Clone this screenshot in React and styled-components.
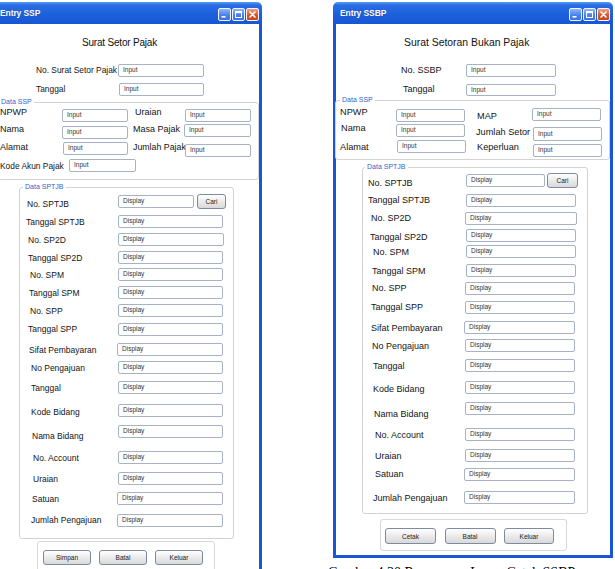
import React from 'react';
import styled, { createGlobalStyle } from 'styled-components';

const Global = createGlobalStyle`
  html, body { margin: 0; padding: 0; background: #fff; overflow: hidden; }
  body { font-family: "Liberation Sans", Arial, sans-serif; color: #151515; }
`;

const Page = styled.div`
  display: flex;
  align-items: flex-start;
  width: 615px;
  height: 569px;
  padding-top: 2px;
  box-sizing: border-box;
  overflow: hidden;
`;

const Column = styled.div`
  display: flex;
  flex-direction: column;
  align-items: flex-start;
  flex-shrink: 0;
  margin-left: ${p => p.$ml}px;
`;

const Window = styled.div`
  display: flex;
  flex-direction: column;
  flex-shrink: 0;
  width: ${p => p.$w}px;
  margin-left: ${p => p.$ml || 0}px;
`;

const TitleBar = styled.div`
  height: 22px;
  box-sizing: border-box;
  display: flex;
  align-items: center;
  padding: 0 3px 0 7px;
  border-radius: 5px 5px 0 0;
  background: linear-gradient(to bottom, #5a9cf6 0%, #2a6ee4 14%, #1c60dc 55%, #1856d2 100%);
`;

const TitleText = styled.span`
  flex: 1;
  color: #fff;
  font-weight: bold;
  font-size: 8.5px;
  letter-spacing: -0.1px;
  text-shadow: 0 0 1px rgba(0, 0, 0, 0.35);
`;

const Controls = styled.div`
  display: flex;
  gap: 1px;
  margin-top: 2px;
`;

const Ctrl = styled.span`
  width: 13px;
  height: 13px;
  box-sizing: border-box;
  border: 1px solid #f2f6ff;
  border-radius: 2px;
  display: flex;
  align-items: center;
  justify-content: center;
  background: ${p => (p.$close
    ? 'linear-gradient(to bottom, #f0a080, #d8532a 60%, #c8441c)'
    : 'linear-gradient(to bottom, #8fb6f8, #4b82ec 55%, #3b70e2)')};
`;

const WinBody = styled.div`
  display: flex;
  flex-direction: column;
  align-items: flex-start;
  background: #fff;
  border: 3px solid #1a55d6;
  border-top: 0;
  padding-bottom: ${p => p.$pb}px;
`;

const Heading = styled.div`
  margin: 13px 0 0 ${p => p.$indent}px;
  font-size: ${p => p.$size}px;
  letter-spacing: ${p => p.$ls || 0}px;
  line-height: 12px;
  white-space: nowrap;
  color: #111;
`;

const RowsWrap = styled.div`
  display: flex;
  flex-direction: column;
  align-self: stretch;
`;

const Row = styled.div`
  display: flex;
  align-items: flex-start;
  flex-shrink: 0;
  height: ${p => p.$h}px;
  margin-top: ${p => p.$mt}px;
`;

const Label = styled.span`
  flex-shrink: 0;
  width: ${p => p.$w}px;
  margin-left: ${p => p.$ml}px;
  margin-top: ${p => p.$mt}px;
  font-size: ${p => p.$fs}px;
  line-height: 10px;
  white-space: nowrap;
  color: #141414;
`;

const Field = styled.div`
  flex-shrink: 0;
  box-sizing: border-box;
  width: ${p => p.$w}px;
  height: ${p => p.$h}px;
  margin-top: ${p => p.$mt}px;
  padding-left: 4px;
  border: 1px solid #a6b2c6;
  border-radius: 2px;
  background: #fff;
  font-size: 6.5px;
  line-height: ${p => p.$h - 3}px;
  color: #333;
  white-space: nowrap;
  overflow: hidden;
`;

const Btn = styled.div`
  flex-shrink: 0;
  box-sizing: border-box;
  width: ${p => p.$w}px;
  height: ${p => p.$h}px;
  margin-left: ${p => p.$ml || 0}px;
  margin-top: ${p => p.$mt || 0}px;
  border: 1px solid #7c8aa3;
  border-radius: 3px;
  background: linear-gradient(to bottom, #ffffff, #e9e9e9 55%, #d9d9d9);
  display: flex;
  align-items: center;
  justify-content: center;
  font-size: 6.5px;
  color: #222;
`;

const Group = styled.fieldset`
  box-sizing: border-box;
  min-width: 0;
  width: ${p => p.$w}px;
  margin: ${p => p.$mt}px 0 0 ${p => p.$ml}px;
  padding: 0;
  border: 1px solid #d3d3d3;
  border-radius: 3px;
`;

const Legend = styled.legend`
  margin-left: ${p => p.$ml}px;
  padding: 0 2px;
  font-size: 7px;
  line-height: 8px;
  color: #3366cc;
`;

const ButtonBar = styled.div`
  display: flex;
  gap: ${p => p.$gap}px;
  box-sizing: border-box;
  width: ${p => p.$w}px;
  margin: ${p => p.$mt}px 0 0 ${p => p.$ml}px;
  padding: 8px 0 ${p => p.$pb}px ${p => p.$pl}px;
  border: 1px solid #d8d8d8;
  border-radius: 3px;
`;

const Caption = styled.div`
  margin: 7px 0 0 -5px;
  font-family: "Liberation Serif", "Times New Roman", serif;
  font-size: 14px;
  line-height: 16px;
  white-space: nowrap;
  color: #000;
`;

const WinControls = () => (
  <Controls>
    <Ctrl>
      <svg width="9" height="9" viewBox="0 0 9 9"><rect x="1.5" y="6" width="4" height="1.6" fill="#fff" /></svg>
    </Ctrl>
    <Ctrl>
      <svg width="9" height="9" viewBox="0 0 9 9"><rect x="1.5" y="1.5" width="6" height="6" fill="none" stroke="#fff" strokeWidth="1" /><rect x="1.5" y="1.5" width="6" height="1.6" fill="#fff" /></svg>
    </Ctrl>
    <Ctrl $close>
      <svg width="9" height="9" viewBox="0 0 9 9"><path d="M2 2 L7 7 M7 2 L2 7" stroke="#fff" strokeWidth="1.6" strokeLinecap="round" /></svg>
    </Ctrl>
  </Controls>
);

const FieldRows = ({ x0, y0, end, rows, fs }) => (
  <RowsWrap>
    {rows.map((r, i) => {
      const next = i < rows.length - 1 ? rows[i + 1].top : end;
      let cur = x0;
      const items = [];
      r.cells.forEach((c, j) => {
        items.push(
          <Label key={'l' + j} $ml={c.lx - cur} $w={c.ix - c.lx} $mt={c.lc - 5 - r.top} $fs={c.fs || fs}>
            {c.label}
          </Label>
        );
        items.push(
          <Field key={'f' + j} $mt={c.iy - r.top} $w={c.iw} $h={c.ih}>
            {c.text}
          </Field>
        );
        cur = c.ix + c.iw;
        if (c.btn) {
          items.push(
            <Btn key={'b' + j} $ml={c.btn.x - cur} $mt={c.btn.y - r.top} $w={c.btn.w} $h={c.btn.h}>
              {c.btn.label}
            </Btn>
          );
          cur = c.btn.x + c.btn.w;
        }
      });
      return (
        <Row key={i} $h={next - r.top} $mt={i === 0 ? r.top - y0 : 0}>
          {items}
        </Row>
      );
    })}
  </RowsWrap>
);

const c = (label, lx, lc, ix, iy, iw, ih = 13, text = 'Input', btn, fs) => ({ label, lx, lc, ix, iy, iw, ih, text, btn, fs });
const d = (label, lx, lc, ix, iy, iw, btn) => ({ top: iy, cells: [c(label, lx, lc, ix, iy, iw, 13, 'Display', btn)] });

/* ---------- left window data (page coordinates) ---------- */
const leftTop = [
  { top: 64, cells: [c('No. Surat Setor Pajak', 36, 70, 118, 64, 86)] },
  { top: 83, cells: [c('Tanggal', 36, 89, 119, 83, 85)] },
];
const leftSSP = [
  { top: 109, cells: [c('NPWP', 0, 112, 62, 109, 66), c('Uraian', 135, 112, 185, 109, 66)] },
  { top: 124, cells: [c('Nama', 0, 129, 62, 126, 66), c('Masa Pajak', 133, 129, 184, 124, 67)] },
  { top: 142, cells: [c('Alamat', 0, 147, 63, 142, 65), c('Jumlah Pajak', 133, 147, 185, 144, 66, 13, 'Input', null, 8.8)] },
  { top: 159, cells: [c('Kode Akun Pajak', 0, 166, 69, 159, 67, 13, 'Input', null, 8.4)] },
];
const leftSPTJB = [
  d('No. SPTJB', 27, 204, 118, 195, 76, { x: 197, y: 194, w: 29, h: 15, label: 'Cari' }),
  d('Tanggal SPTJB', 26, 222, 118, 215, 105),
  d('No. SP2D', 28, 240, 118, 233, 106),
  d('Tanggal SP2D', 28, 258, 118, 251, 105),
  d('No. SPM', 30, 275, 118, 268, 105),
  d('Tanggal SPM', 29, 293, 118, 286, 105),
  d('No. SPP', 30, 311, 118, 304, 105),
  d('Tanggal SPP', 28, 329, 118, 323, 105),
  d('Sifat Pembayaran', 29, 350, 117, 343, 106),
  d('No Pengajuan', 31, 368, 118, 361, 105),
  d('Tanggal', 31, 388, 118, 381, 105),
  d('Kode Bidang', 31, 412, 118, 404, 105),
  d('Nama Bidang', 32, 436, 118, 425, 105),
  d('No. Account', 33, 458, 118, 451, 105),
  d('Uraian', 33, 479, 118, 472, 105),
  d('Satuan', 32, 499, 117, 492, 106),
  d('Jumlah Pengajuan', 31, 520, 117, 514, 106),
];

/* ---------- right window data (page coordinates) ---------- */
const rightTop = [
  { top: 64, cells: [c('No. SSBP', 401, 70, 466, 64, 90)] },
  { top: 84, cells: [c('Tanggal', 403, 89, 466, 84, 90, 12)] },
];
const rightSSP = [
  { top: 108, cells: [c('NPWP', 340, 112, 396, 109, 69), c('MAP', 477, 116, 532, 108, 69)] },
  { top: 124, cells: [c('Nama', 341, 128, 396, 124, 69), c('Jumlah Setor', 476, 132, 533, 127, 69, 14)] },
  { top: 140, cells: [c('Alamat', 340, 147, 397, 140, 69), c('Keperluan', 477, 147, 533, 144, 69)] },
];
const rightSPTJB = [
  d('No. SPTJB', 368, 183, 466, 174, 79, { x: 547, y: 173, w: 31, h: 15, label: 'Cari' }),
  d('Tanggal SPTJB', 368, 200, 466, 194, 110),
  d('No. SP2D', 371, 218, 465, 212, 112),
  d('Tanggal SP2D', 370, 237, 466, 229, 110),
  d('No. SPM', 373, 252, 466, 245, 110),
  d('Tanggal SPM', 372, 271, 466, 264, 110),
  d('No. SPP', 372, 288, 465, 282, 110),
  d('Tanggal SPP', 371, 307, 465, 301, 110),
  d('Sifat Pembayaran', 371, 328, 464, 321, 111),
  d('No Pengajuan', 372, 346, 465, 339, 110),
  d('Tanggal', 373, 366, 465, 359, 110),
  d('Kode Bidang', 373, 389, 465, 381, 110),
  d('Nama Bidang', 374, 414, 465, 402, 110),
  d('No. Account', 375, 435, 465, 428, 110),
  d('Uraian', 375, 456, 465, 449, 110),
  d('Satuan', 375, 474, 464, 468, 111),
  d('Jumlah Pengajuan', 373, 498, 464, 491, 111),
];

export default function App() {
  return (
    <>
      <Global />
      <Page>
        {/* Left window: outer x -7..262, content x -4 */}
        <Window $w={269} $ml={-7}>
          <TitleBar>
            <TitleText>Entry SSP</TitleText>
            <WinControls />
          </TitleBar>
          <WinBody $pb={20}>
            <Heading $indent={86} $size={10} $ls={-0.2}>Surat Setor Pajak</Heading>
            <FieldRows x0={-4} y0={49} end={98} rows={leftTop} fs={8.4} />
            <Group $w={261} $ml={2} $mt={0}>
              <Legend $ml={0}>Data SSP</Legend>
              <FieldRows x0={-1} y0={106} end={179} rows={leftSSP} fs={9} />
            </Group>
            <Group $w={215} $ml={23} $mt={3}>
              <Legend $ml={3}>Data SPTJB</Legend>
              <FieldRows x0={20} y0={191} end={538} rows={leftSPTJB} fs={8.5} />
            </Group>
            <ButtonBar $w={178} $ml={41} $mt={2} $pl={5} $pb={8} $gap={8}>
              <Btn $w={48} $h={15}>Simpan</Btn>
              <Btn $w={48} $h={15}>Batal</Btn>
              <Btn $w={48} $h={15}>Keluar</Btn>
            </ButtonBar>
          </WinBody>
        </Window>

        {/* Right column: window outer x 333..613, content x 336 */}
        <Column $ml={71}>
          <Window $w={280}>
            <TitleBar>
              <TitleText>Entry SSBP</TitleText>
              <WinControls />
            </TitleBar>
            <WinBody $pb={4}>
              <Heading $indent={68} $size={10.4}>Surat Setoran Bukan Pajak</Heading>
              <FieldRows x0={336} y0={49} end={96} rows={rightTop} fs={9} />
              <Group $w={275} $ml={-1} $mt={0}>
                <Legend $ml={4}>Data SSP</Legend>
                <FieldRows x0={336} y0={104} end={159} rows={rightSSP} fs={9.2} />
              </Group>
              <Group $w={226} $ml={26} $mt={3}>
                <Legend $ml={2}>Data SPTJB</Legend>
                <FieldRows x0={363} y0={171} end={513} rows={rightSPTJB} fs={9} />
              </Group>
              <ButtonBar $w={187} $ml={44} $mt={5} $pl={4} $pb={6} $gap={8.5}>
                <Btn $w={51} $h={16}>Cetak</Btn>
                <Btn $w={51} $h={16}>Batal</Btn>
                <Btn $w={50} $h={16}>Keluar</Btn>
              </ButtonBar>
            </WinBody>
          </Window>
          <Caption>Gambar 4.30 Rancangan Layar Cetak SSBP</Caption>
        </Column>
      </Page>
    </>
  );
}
